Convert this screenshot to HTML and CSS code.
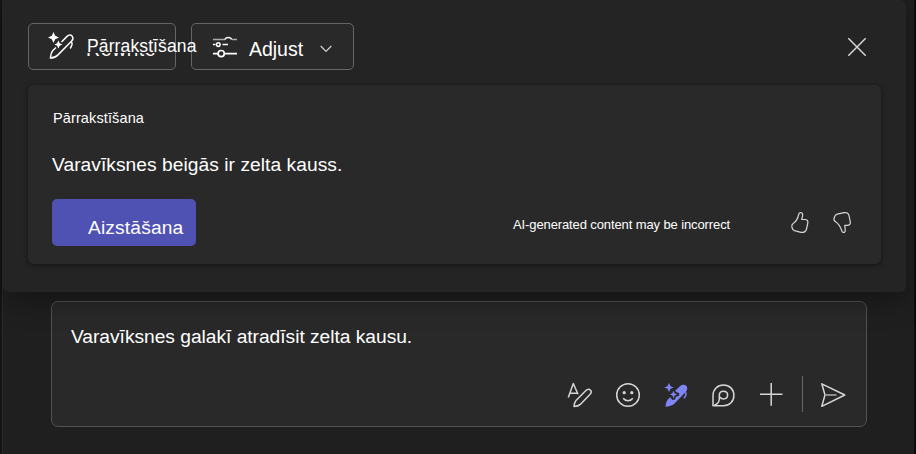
FILE: index.html
```html
<!DOCTYPE html>
<html lang="lv">
  <head>
    <meta charset="UTF-8" />
    <meta name="viewport" content="width=device-width, initial-scale=1.0" />
    <title>Pārrakstīšana</title>
    <link rel="stylesheet" href="styles.css">
  </head>
  <body>
    <div class="app">
      <section class="panel">
        <div class="toolbar">
          <button class="tool rewrite" type="button">
            <svg class="icon" width="28" height="30" viewBox="0 0 28 30">
              <path class="solid" d="M5.5 2 L7.2 5.8 L11 7.5 L7.2 9.2 L5.5 13 L3.8 9.2 L0 7.5 L3.8 5.8 Z M10.4 10.5 L11.7 13.2 L14.4 14.5 L11.7 15.8 L10.4 18.5 L9.1 15.8 L6.4 14.5 L9.1 13.2 Z" />
              <path d="M13.5 12 L19 6.4 C21 4.4 23.4 4.7 24.4 6.5 C25.4 8.3 24.8 10 23.5 11.3 L10 24.9 C8.3 26.6 4.8 28 2.4 28.1 C2.6 25.5 3.2 22.5 4.6 20.8 L8 17.5 M23.2 11.8 C25.2 13 24 15.5 22.2 18.5" />
            </svg>
            <span class="label">Pārrakstīšana</span>
            <span class="label-under">Rewrite</span>
          </button>
          <button class="tool adjust" type="button">
            <svg class="icon" width="26" height="24" viewBox="0 0 26 24">
              <path class="dim" d="M1 3.5 H13 M20 3.5 H25" />
              <path d="M13 3.5 C13.8 .8 18.8 .8 19.6 3.5 M1 8.6 H3.5 M10.5 8.6 H16" />
              <circle cx="6.3" cy="8.6" r="1.8" />
              <path d="M1 17.6 H6 M12.5 17.6 H25" stroke-width="1.7" />
              <circle cx="9.2" cy="17.6" r="3.1" stroke-width="1.7" />
            </svg>
            <span class="label">Adjust</span>
            <svg class="chevron" width="12" height="8" viewBox="0 0 12 8">
              <path d="M.7 1 L6 6.4 L11.3 1" />
            </svg>
          </button>
          <button class="close" type="button" aria-label="Close">
            <svg width="20" height="20" viewBox="0 0 20 20">
              <path d="M1.3 1.3 L18.7 18.7 M18.7 1.3 L1.3 18.7" />
            </svg>
          </button>
        </div>

        <div class="card">
          <p class="card-title">Pārrakstīšana</p>
          <p class="suggestion">Varavīksnes beigās ir zelta kauss.</p>
          <div class="card-footer">
            <button class="replace" type="button"><span>Aizstāšana</span></button>
            <span class="notice">AI-generated content may be incorrect</span>
            <svg class="thumb" width="20" height="24" viewBox="0 0 20 24">
              <path d="M9.8 1.7 C11.8 1 13 2.6 12.6 4.8 L11.7 8.5 H15 C17.3 8.5 18.2 10.2 17.8 12 L16.5 18 C15.9 20.7 13.6 21.9 11 21.3 L4.4 19.7 C3 19.3 2.6 18.5 2.2 17 L1.8 15.6 C1.5 14.2 2.2 13 3.5 12.2 C7 10 7.8 7.5 8.7 3.5 C8.9 2.6 9 2 9.8 1.7 Z" />
            </svg>
            <svg class="thumb" width="20" height="24" viewBox="0 0 20 24">
              <path d="M10.8 21.3 C12.8 22 13.4 20.3 13.2 18.5 L12.8 14.3 H15.2 C17.6 14.3 18.7 12.8 18.3 10.8 L17.1 5 C16.5 2.2 14.5 1.1 12 1.7 L5.2 3.2 C3.8 3.5 3.1 4.3 2.6 5.7 L2.1 7.2 C1.7 8.8 2.2 10 3.5 10.7 C7.3 12.8 8.3 15.5 9.7 19.5 C10 20.4 10.1 21 10.8 21.3 Z" />
            </svg>
          </div>
        </div>
      </section>

      <section class="compose">
        <p class="message">Varavīksnes galakī atradīsit zelta kausu.</p>
        <div class="actions">
          <svg width="26" height="28" viewBox="0 0 26 28">
            <path d="M1.3 16.5 L6.3 2.5 L11 13.2 M2.8 12.2 H10 M7 25.5 C7.2 23 7.8 20.8 9 19.5 L19.2 9.3 C20.7 7.8 22.2 7.8 23.3 9 C24.4 10.2 24.3 12.2 22.9 13.5 L13.3 23.4 C11.8 24.8 9.5 25.4 7 25.5 Z" />
          </svg>
          <svg width="26" height="28" viewBox="0 0 26 28">
            <circle cx="13" cy="14" r="11.3" />
            <path d="M8.2 17.3 C10.5 20.6 15.5 20.6 17.8 17.3" />
            <circle class="dot" cx="9.2" cy="11.7" r="1.6" />
            <circle class="dot" cx="16.8" cy="11.7" r="1.6" />
          </svg>
          <svg class="active" width="26" height="28" viewBox="0 0 26 28">
            <path class="solid" d="M12.2 9.8 L17.2 5 C19.2 3.2 22 3.5 23.4 5 C24.8 6.6 24.4 9.2 22.9 10.8 L11.8 22.2 C9.8 24.3 6 25.5 2.5 25.7 C2.7 22.5 3.5 19.8 5.4 17.7 L7.5 16.2 L9 18.7 H11.8 L13 15.8 L16.2 14.7 V12.2 L13.2 11 Z" />
            <path class="solid" d="M6 2 L7.5 5.2 L10.7 6.5 L7.5 7.8 L6 11 L4.5 7.8 L1.2 6.5 L4.5 5.2 Z M10.5 9.7 L11.6 12.3 L14.2 13.4 L11.6 14.6 L10.5 17.2 L9.4 14.6 L6.8 13.4 L9.4 12.3 Z" />
            <path d="M22.4 11.2 C23.9 12.8 22.7 15 21 17.3" />
          </svg>
          <svg width="26" height="28" viewBox="0 0 26 28">
            <path d="M2 24.7 V14.5 C2 8.5 6.4 3.9 12.5 3.9 C18.5 3.9 22.9 8.4 22.9 14.4 C22.9 20.2 18.5 24.7 12.5 24.7 Z" />
            <path d="M3.4 24.2 C6.4 23 8.3 21.8 8.3 18 V14.3 C8.3 11.7 10.2 10.2 12.5 10.2 C14.9 10.2 16.6 11.8 16.6 14.1 C16.6 16.5 14.9 18 12.5 18 C10.7 18 9.6 17.2 8.8 16" />
          </svg>
          <svg width="26" height="28" viewBox="0 0 26 28">
            <path d="M1 13.3 H23.5 M12.2 2 V24.7" />
          </svg>
          <span class="divider"></span>
          <svg width="26" height="28" viewBox="0 0 26 28">
            <path d="M1.8 2.8 L24.8 14 L1.8 25.3 L5 14 Z" />
            <path class="dim" d="M5.5 14 H16.5" stroke-width="1.8" />
          </svg>
        </div>
      </section>
    </div>
  </body>
</html>
```
FILE: styles.css
```css
* {
  box-sizing: border-box;
}
body {
  margin: 0;
  height: 454px;
  overflow: hidden;
  background-color: #1f1f1f;
  color: #fff;
  font-family: "Liberation Sans", Arial, sans-serif;
}
.app {
  height: 454px;
  border-left: 2px solid #171317;
  border-right: 2px solid #0c0c0c;
  box-shadow: inset 1px 0 #2b282b;
}
p {
  margin: 0;
  white-space: nowrap;
}
button {
  padding: 0;
  color: #fff;
  font-family: inherit;
  background: none;
  border: none;
}
svg {
  display: block;
  flex: none;
  fill: none;
  stroke: #d6d6d6;
  stroke-width: 1.5;
  stroke-linejoin: round;
}
.solid {
  fill: #fff;
  stroke: none;
}
.dim {
  stroke: #999;
}
.dot {
  fill: #d6d6d6;
  stroke: none;
}
.panel {
  position: relative;
  width: 903px;
  height: 292px;
  margin-left: 1px;
  padding: 23px 25px 0;
  background-color: #242424;
  border-radius: 0 6px 6px 6px;
  box-shadow: 0 8px 28px rgba(0, 0, 0, 0.35);
}
.toolbar {
  display: flex;
  align-items: center;
  height: 47px;
}
.tool {
  position: relative;
  display: flex;
  height: 47px;
  border: 1px solid #666;
  border-radius: 5px;
  background-color: #292929;
  white-space: nowrap;
}
.tool svg {
  stroke: #fff;
}
.tool .dim {
  stroke: #aaa;
}
.rewrite {
  z-index: 1;
  width: 148px;
  padding: 6px 0 0 19px;
}
.rewrite .label {
  margin: 6px 0 0 11px;
  font-size: 17.5px;
  line-height: 20px;
  letter-spacing: 0.12px;
}
/* old caption, only its lower edge is visible */
.label-under {
  position: absolute;
  left: 57px;
  top: 14px;
  font-size: 19.5px;
  line-height: 22px;
  letter-spacing: 0.6px;
  clip-path: inset(15px 0 0 0);
}
.adjust {
  width: 163px;
  margin-left: 15px;
  padding: 12px 0 0 20px;
}
.adjust .label {
  width: 56px;
  margin: 2px 0 0 10px;
  font-size: 19.5px;
  line-height: 22px;
}
.adjust .chevron {
  margin: 9px 0 0 16px;
  stroke: #d6d6d6;
  stroke-width: 1.2;
}
.close {
  margin: 0 14px 0 auto;
}
.card {
  height: 179px;
  margin-top: 15px;
  padding: 24px 28px 0 24px;
  background-color: #292929;
  border-radius: 6px;
  box-shadow: 0 1px 5px rgba(0, 0, 0, 0.5);
}
.card-title {
  padding-left: 1px;
  font-size: 14.5px;
  line-height: 18px;
  letter-spacing: 0.12px;
}
.suggestion {
  margin-top: 26px;
  font-size: 19.2px;
  line-height: 24px;
  letter-spacing: 0.05px;
}
.card-footer {
  display: flex;
  align-items: center;
  margin-top: 22px;
}
.replace {
  width: 144px;
  height: 47px;
  padding: 10px 0 0 36px;
  text-align: left;
  font-size: 19.2px;
  letter-spacing: 0.15px;
  background-color: #4f52b2;
  border-radius: 5px;
  white-space: nowrap;
}
.notice {
  width: 218px;
  margin: 4px 59px 0 317px;
  font-size: 13px;
  line-height: 16px;
  letter-spacing: -0.11px;
  white-space: nowrap;
}
.thumb {
  margin-top: 1px;
  stroke-width: 1.2;
}
.thumb + .thumb {
  margin-left: 22px;
}
.compose {
  display: flex;
  flex-direction: column;
  justify-content: space-between;
  width: 816px;
  height: 126px;
  margin: 9px 0 0 49px;
  padding: 23px 20px 14px 19px;
  background-color: #292929;
  border: 1px solid #525252;
  border-radius: 7px;
}
.message {
  font-size: 19.2px;
  line-height: 24px;
  letter-spacing: -0.02px;
}
.actions {
  display: flex;
  justify-content: flex-end;
  align-items: center;
  gap: 22px;
}
.active {
  stroke: #7f85f5;
}
.active .solid {
  fill: #7f85f5;
}
.active .solid + .solid {
  stroke: #292929;
  stroke-width: 1.4;
  paint-order: stroke;
}
.divider {
  width: 1px;
  height: 36px;
  margin: -2px -5px 0 -5px;
  background-color: #666;
}
```
